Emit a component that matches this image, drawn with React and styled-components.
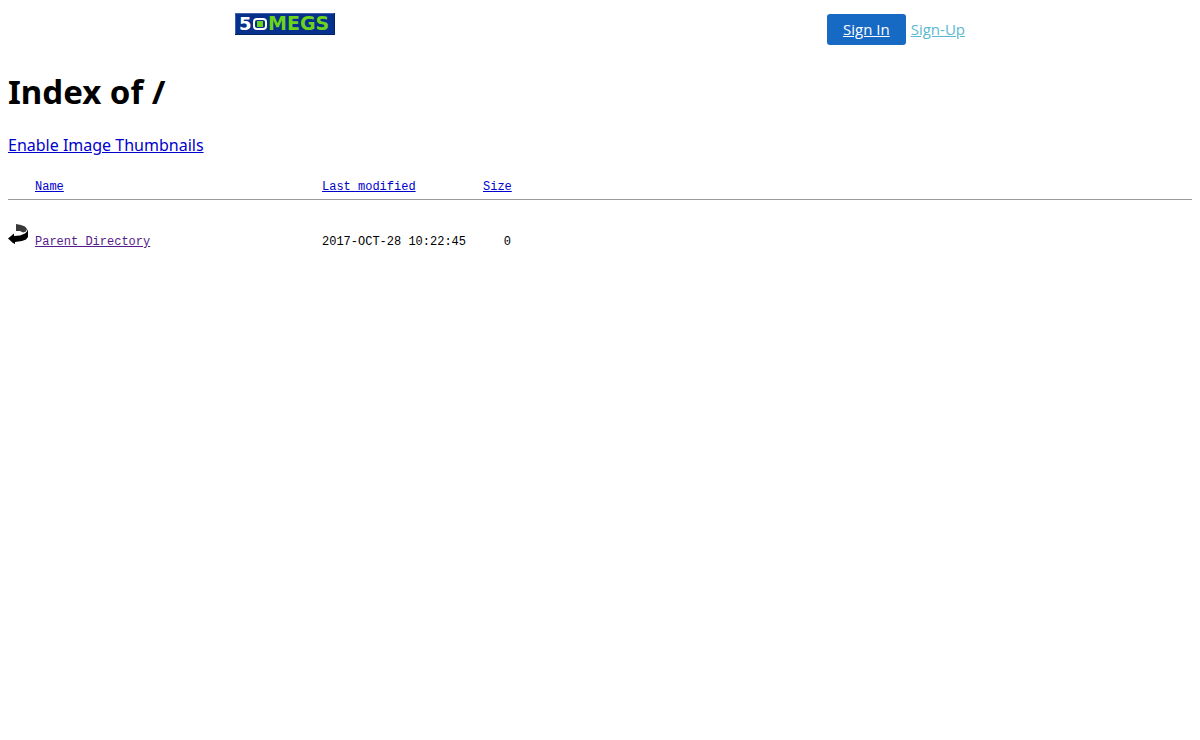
import React from 'react';
import styled, { createGlobalStyle } from 'styled-components';

const GlobalStyle = createGlobalStyle`
    body {
        margin: 0;
        background: #fff;
        color: #000;
        font-family: 'Noto Sans', 'Open Sans', sans-serif;
        font-size: 16px;
    }
`;

const Page = styled.div`
    padding: 0 8px;
`;

const TopBar = styled.header`
    display: flex;
    justify-content: space-between;
    max-width: 730px;
    margin: 0 auto;
    padding-top: 13px;
`;

const LogoLink = styled.a`
    display: block;
    height: 22px;
`;

const LogoText = styled.text`
    font-family: 'DejaVu Sans', sans-serif;
    font-weight: bold;
    font-size: ${({ $size }) => $size};
    fill: ${({ $color }) => $color};
`;

const Account = styled.nav`
    display: flex;
    align-items: center;
    gap: 5px;
    padding-top: 1px;
    font-family: 'Open Sans', sans-serif;
    font-size: 15px;
    line-height: 19px;
`;

const SignIn = styled.a`
    padding: 6px 16px;
    border-radius: 3px;
    background: #176ac4;
    color: #fff;
`;

const SignUp = styled.a`
    color: #5bb8d0;
`;

const Title = styled.h1`
    margin: 24px 0 20px;
    font-size: 33px;
    line-height: 45px;
    font-weight: bold;
`;

const ThumbnailLink = styled.a`
    display: block;
    width: fit-content;
    line-height: 22px;
    color: #0000cc;
`;

const Listing = styled.table`
    width: 100%;
    margin-top: 23px;
    border-collapse: collapse;
    table-layout: fixed;
    font-family: 'Liberation Mono', monospace;
    font-size: 12px;
    line-height: 16px;
    text-align: left;
`;

const HeadCell = styled.th`
    width: ${({ $width }) => $width || 'auto'};
    padding: 0 0 4px;
    border-bottom: 1px solid #9a9a9a;
    font-weight: normal;
`;

const Cell = styled.td`
    padding: 24px 0 0;
    vertical-align: bottom;
`;

const SizeValue = styled.span`
    display: inline-block;
    width: 28px;
    text-align: right;
`;

const ListLink = styled.a`
    color: ${({ $visited }) => ($visited ? '#551a8b' : '#0000cc')};
`;

const BackIcon = styled.svg`
    display: block;
    margin-bottom: 4px;
`;

const columns = [
    { label: 'Name', width: '287px' },
    { label: 'Last modified', width: '161px' },
    { label: 'Size' },
];

const files = [
    { name: 'Parent Directory', modified: '2017-OCT-28 10:22:45', size: 0 },
];

const Logo = () => (
    <svg width="100" height="22" viewBox="0 0 100 22" role="img" aria-label="50megs">
        <rect width="100" height="22" fill="#06308c" />
        <path d="M0 22V0H100" fill="none" stroke="#3d61aa" strokeWidth="2" />
        <path d="M100 0V22H0" fill="none" stroke="#032261" strokeWidth="2" />
        <LogoText x="4" y="17" $size="18px" $color="#fff">5</LogoText>
        <rect x="19" y="6" width="12" height="10" rx="3" fill="none" stroke="#fff" strokeWidth="2" />
        <rect x="22" y="8" width="6" height="6" fill="#6bd319" />
        <LogoText x="33" y="17" $size="19px" $color="#6bd319">MEGS</LogoText>
    </svg>
);

const Back = () => (
    <BackIcon width="20" height="22" viewBox="0 0 20 22" aria-hidden="true">
        <path d="M8 0L13 1L17 2.500L19 5L18 7.500L15 8.500L12 7L8 7Z" fill="#3a3a3a" />
        <path d="M20 5V13L18 15.500L14 17L7 18V20L5 19L0 14.500L6 9.500V12L12 11.500L17 9.500L19 7.500Z" fill="#000" />
    </BackIcon>
);

const App = () => {

    return (
        <>
            <GlobalStyle />
            <Page>
                <TopBar>
                    <LogoLink href="#"><Logo /></LogoLink>
                    <Account>
                        <SignIn href="#">Sign In</SignIn>
                        <SignUp href="#">Sign-Up</SignUp>
                    </Account>
                </TopBar>
                <Title>Index of /</Title>
                <ThumbnailLink href="#">Enable Image Thumbnails</ThumbnailLink>
                <Listing>
                    <thead>
                        <tr>
                            <HeadCell $width="27px" />
                            {columns.map(({ label, width }) => (
                                <HeadCell key={label} $width={width} scope="col">
                                    <ListLink href="#">{label}</ListLink>
                                </HeadCell>
                            ))}
                        </tr>
                    </thead>
                    <tbody>
                        {files.map(({ name, modified, size }) => (
                            <tr key={name}>
                                <Cell><Back /></Cell>
                                <Cell><ListLink href="#" $visited>{name}</ListLink></Cell>
                                <Cell>{modified}</Cell>
                                <Cell><SizeValue>{size}</SizeValue></Cell>
                            </tr>
                        ))}
                    </tbody>
                </Listing>
            </Page>
        </>
    );
}

export default App;
